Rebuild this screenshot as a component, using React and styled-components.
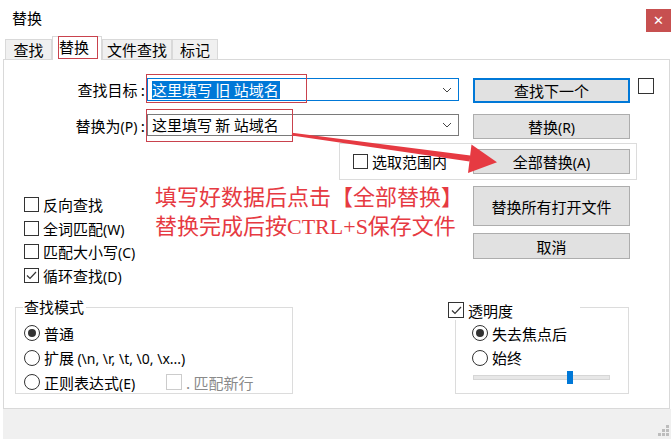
import React from "react";
import styled, { createGlobalStyle } from "styled-components";

const GlobalStyle = createGlobalStyle`
  html, body {
    margin: 0;
    padding: 0;
    background: #fff;
  }
  body {
    font-family: "Noto Sans CJK SC", "Noto Sans", sans-serif;
  }
`;

const RED = "#e63a42";

const Window = styled.div`
  position: relative;
  width: 671px;
  height: 440px;
  background: #fff;
  color: #000;
  font-size: 15px;
  overflow: hidden;
  display: flex;
  flex-direction: column;
`;

const TitleBar = styled.div`
  height: 36px;
  flex: none;
  display: flex;
  justify-content: space-between;
  padding-left: 12px;
  box-sizing: border-box;
`;

const Title = styled.div`
  line-height: 36px;
`;

const CloseBtn = styled.div`
  width: 25px;
  height: 23px;
  margin-top: 9px;
  background: #c75050;
  color: #fff;
  display: flex;
  align-items: center;
  justify-content: center;
  font-family: "DejaVu Sans", sans-serif;
  font-size: 13px;
`;

const TabStrip = styled.div`
  height: 23px;
  flex: none;
  display: flex;
  align-items: flex-end;
  padding-left: 5px;
  position: relative;
  z-index: 1;
`;

const Tab = styled.div`
  position: relative;
  box-sizing: border-box;
  width: ${(p) => p.$w}px;
  height: ${(p) => (p.$active ? 24 : 20)}px;
  margin-bottom: ${(p) => (p.$active ? -1 : 0)}px;
  background: ${(p) => (p.$active ? "#fff" : "#f0f0f0")};
  border: 1px solid #d9d9d9;
  border-bottom: none;
  display: flex;
  align-items: ${(p) => (p.$active ? "flex-start" : "center")};
  justify-content: center;
  padding-right: ${(p) => (p.$active ? 6 : 0)}px;
  line-height: 20px;
`;

const RedMark = styled.div`
  position: absolute;
  left: ${(p) => p.$l}px;
  top: ${(p) => p.$t}px;
  width: ${(p) => p.$w}px;
  height: ${(p) => p.$h}px;
  border: 1px solid #c9424d;
  box-sizing: border-box;
  pointer-events: none;
`;

const Panel = styled.div`
  margin-left: 3px;
  width: 667px;
  height: 350px;
  flex: none;
  box-sizing: border-box;
  border: 1px solid #d9d9d9;
  display: flex;
  flex-direction: column;
`;

const FieldRow = styled.div`
  display: flex;
  align-items: flex-start;
  height: 25px;
  margin-top: ${(p) => p.$mt}px;
`;

const Label = styled.div`
  width: 141px;
  margin-right: 2px;
  text-align: right;
  line-height: 23px;
  white-space: nowrap;
`;

const Key = styled.span`
  font-family: "Noto Sans", sans-serif;
  font-size: 14px;
`;

const Combo = styled.div`
  position: relative;
  width: 312px;
  height: ${(p) => (p.$focus ? 23 : 22)}px;
  box-sizing: border-box;
  border: 1px solid ${(p) => (p.$focus ? "#0078d7" : "#7a7a7a")};
  background: #fff;
  display: flex;
  align-items: center;
  padding-left: 4px;
  white-space: pre;
`;

const ComboText = styled.span`
  line-height: 18px;
  padding: 0 1px 0 0;
  background: ${(p) => (p.$selected ? "#0078d7" : "transparent")};
  color: ${(p) => (p.$selected ? "#fff" : "#000")};
`;

const Chevron = styled.svg`
  margin-left: auto;
  margin-right: 6px;
  flex: none;
`;

const Button = styled.div`
  box-sizing: border-box;
  width: 157px;
  height: ${(p) => p.$h || 25}px;
  margin-left: ${(p) => p.$ml || 0}px;
  flex: none;
  background: #e1e1e1;
  border: ${(p) => (p.$default ? "2px solid #0078d7" : "1px solid #adadad")};
  display: flex;
  align-items: center;
  justify-content: center;
  white-space: nowrap;
`;

const Box = styled.span`
  box-sizing: border-box;
  width: ${(p) => p.$size || 15}px;
  height: ${(p) => p.$size || 15}px;
  flex: none;
  border: 1px solid ${(p) => (p.$disabled ? "#cccccc" : "#333")};
  background: #fff;
  display: inline-flex;
  align-items: center;
  justify-content: center;
  margin-left: ${(p) => p.$ml || 0}px;
`;

const SelectionGroup = styled.div`
  margin-top: 4px;
  margin-left: 335px;
  width: 298px;
  height: 37px;
  box-sizing: border-box;
  border: 1px solid #dcdcdc;
  display: flex;
  align-items: center;
  padding-left: 13px;
  padding-right: 6px;
`;

const Option = styled.div`
  display: flex;
  align-items: center;
  gap: 4px;
  height: ${(p) => p.$h || 23.5}px;
  white-space: nowrap;
`;

const OptionText = styled.span`
  display: inline-block;
  min-width: ${(p) => p.$w || 0}px;
  color: ${(p) => (p.$muted ? "#8a8a8a" : "inherit")};
`;

const PushRight = styled.div`
  margin-left: auto;
`;

const LowerBlock = styled.div`
  margin-top: 6px;
  height: 106px;
  display: flex;
`;

const LeftArea = styled.div`
  width: 469px;
  display: flex;
  padding-left: 20px;
  box-sizing: border-box;
`;

const CheckList = styled.div`
  width: 131px;
  padding-top: 7px;
  display: flex;
  flex-direction: column;
`;

const Annotation = styled.div`
  margin-top: -3px;
  color: ${RED};
  font-family: "Liberation Serif", "Noto Sans CJK SC", serif;
  font-size: 22px;
  line-height: 29px;
  white-space: nowrap;
`;

const ButtonColumn = styled.div`
  display: flex;
  flex-direction: column;
  gap: 7px;
`;

const GroupsRow = styled.div`
  margin-top: 15px;
  display: flex;
  padding-left: 11px;
  gap: 162px;
`;

const GroupBox = styled.div`
  position: relative;
  width: ${(p) => p.$w}px;
  height: 87px;
  box-sizing: border-box;
  border: 1px solid #dcdcdc;
  padding-top: 13px;
  padding-left: ${(p) => p.$pl}px;
`;

const Legend = styled.div`
  position: absolute;
  left: ${(p) => p.$l}px;
  top: ${(p) => p.$t}px;
  width: ${(p) => p.$w}px;
  height: 20px;
  background: #fff;
  display: flex;
  align-items: center;
  gap: 4px;
  padding-left: 1px;
`;

const Radio = styled.span`
  box-sizing: border-box;
  width: 16px;
  height: 16px;
  flex: none;
  border-radius: 50%;
  border: 1px solid #333;
  display: inline-flex;
  align-items: center;
  justify-content: center;

  &::after {
    content: "";
    width: 8px;
    height: 8px;
    border-radius: 50%;
    background: #333;
    display: ${(p) => (p.$on ? "block" : "none")};
  }
`;

const Slider = styled.div`
  position: relative;
  margin-top: 1px;
  margin-left: 1px;
  width: 137px;
  height: 13px;
  display: flex;
  align-items: center;
`;

const Track = styled.div`
  width: 100%;
  height: 5px;
  box-sizing: border-box;
  background: #e7e7e7;
  border: 1px solid #d6d6d6;
`;

const Thumb = styled.div`
  position: absolute;
  left: 94px;
  top: 0;
  width: 6px;
  height: 13px;
  background: #0078d7;
`;

const StatusStrip = styled.div`
  margin-left: 3px;
  height: 28px;
  flex: none;
  background: #f0f0f0;
  display: flex;
  justify-content: flex-end;
  align-items: flex-end;
  padding: 0 2px 2px 0;
`;

const Overlay = styled.svg`
  position: absolute;
  left: 0;
  top: 0;
  pointer-events: none;
`;

function Check({ on, size, disabled, ml }) {
  return (
    <Box $size={size} $disabled={disabled} $ml={ml}>
      {on && (
        <svg width="11" height="9" viewBox="0 0 11 9">
          <path d="M1 4.5 L4 7.5 L10 1" fill="none" stroke="#333" strokeWidth="1.2" />
        </svg>
      )}
    </Box>
  );
}

function ChevronDown() {
  return (
    <Chevron width="10" height="6" viewBox="0 0 10 6">
      <path d="M1 1 L5 5 L9 1" fill="none" stroke="#444" strokeWidth="1" />
    </Chevron>
  );
}

export default function App() {
  return (
    <>
      <GlobalStyle />
      <Window>
        <TitleBar>
          <Title>替换</Title>
          <CloseBtn>✕</CloseBtn>
        </TitleBar>

        <TabStrip>
          <Tab $w={47}>查找</Tab>
          <Tab $w={50} $active>
            替换
            <RedMark $l={5} $t={-1} $w={40} $h={23} />
          </Tab>
          <Tab $w={70}>文件查找</Tab>
          <Tab $w={46}>标记</Tab>
        </TabStrip>

        <Panel>
          <FieldRow $mt={18}>
            <Label>查找目标 :</Label>
            <Combo $focus>
              <ComboText $selected>这里填写 旧 站域名</ComboText>
              <ChevronDown />
              <RedMark $l={-2} $t={-5} $w={161} $h={29} />
            </Combo>
            <Button $default $ml={14}>查找下一个</Button>
            <Check size={16} ml={8} />
          </FieldRow>

          <FieldRow $mt={11}>
            <Label>
              替换为<Key>(P)</Key> :
            </Label>
            <Combo>
              <ComboText>这里填写 新 站域名</ComboText>
              <ChevronDown />
              <RedMark $l={-2} $t={-6} $w={147} $h={33} />
            </Combo>
            <Button $ml={14}>
              <span>
                替换<Key>(R)</Key>
              </span>
            </Button>
          </FieldRow>

          <SelectionGroup>
            <Option>
              <Check />
              <OptionText>选取范围内</OptionText>
            </Option>
            <PushRight>
              <Button>
                <span>
                  全部替换<Key>(A)</Key>
                </span>
              </Button>
            </PushRight>
          </SelectionGroup>

          <LowerBlock>
            <LeftArea>
              <CheckList>
                <Option>
                  <Check />
                  <OptionText>反向查找</OptionText>
                </Option>
                <Option>
                  <Check />
                  <OptionText>
                    全词匹配<Key>(W)</Key>
                  </OptionText>
                </Option>
                <Option>
                  <Check />
                  <OptionText>
                    匹配大小写<Key>(C)</Key>
                  </OptionText>
                </Option>
                <Option>
                  <Check on />
                  <OptionText>
                    循环查找<Key>(D)</Key>
                  </OptionText>
                </Option>
              </CheckList>
              <Annotation>
                <div>填写好数据后点击【全部替换】</div>
                <div>替换完成后按CTRL+S保存文件</div>
              </Annotation>
            </LeftArea>
            <ButtonColumn>
              <Button $h={40}>替换所有打开文件</Button>
              <Button $h={26}>取消</Button>
            </ButtonColumn>
          </LowerBlock>

          <GroupsRow>
            <GroupBox $w={278} $pl={8}>
              <Legend $l={7} $t={-12} $w={62}>查找模式</Legend>
              <Option $h={24.5}>
                <Radio $on />
                <OptionText>普通</OptionText>
              </Option>
              <Option $h={24.5}>
                <Radio />
                <OptionText>
                  扩展 <Key>{"(\\n, \\r, \\t, \\0, \\x...)"}</Key>
                </OptionText>
              </Option>
              <Option $h={24.5}>
                <Radio />
                <OptionText $w={118}>
                  正则表达式<Key>(E)</Key>
                </OptionText>
                <Check disabled size={16} />
                <OptionText $muted>. 匹配新行</OptionText>
              </Option>
            </GroupBox>

            <GroupBox $w={174} $pl={16}>
              <Legend $l={-9} $t={-8} $w={132}>
                <Check on size={16} />
                <OptionText>透明度</OptionText>
              </Legend>
              <Option $h={24.5}>
                <Radio $on />
                <OptionText>失去焦点后</OptionText>
              </Option>
              <Option $h={24.5}>
                <Radio />
                <OptionText>始终</OptionText>
              </Option>
              <Slider>
                <Track />
                <Thumb />
              </Slider>
            </GroupBox>
          </GroupsRow>
        </Panel>

        <StatusStrip>
          <svg width="12" height="12" viewBox="0 0 12 12">
            {[
              [9, 0],
              [9, 4],
              [5, 4],
              [9, 8],
              [5, 8],
              [1, 8],
            ].map(([x, y]) => (
              <rect key={`${x}-${y}`} x={x} y={y} width="3" height="3" fill="#bdbdbd" />
            ))}
          </svg>
        </StatusStrip>

        <Overlay width="671" height="440" viewBox="0 0 671 440">
          <polygon
            points="292,132.8 291.8,135.4 469.6,161.6 470.4,155.6"
            fill={RED}
          />
          <polygon points="471.5,144.5 497,162.2 468,173" fill={RED} />
        </Overlay>
      </Window>
    </>
  );
}
